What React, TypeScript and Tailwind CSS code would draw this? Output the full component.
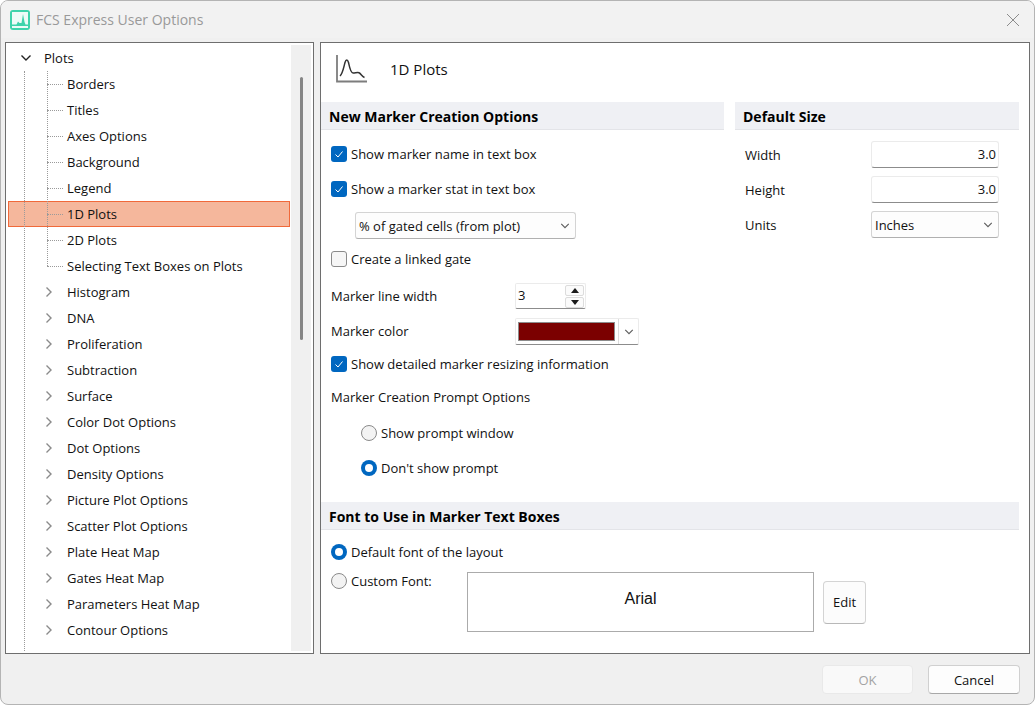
const treeItems = [
  { label: "Borders", leaf: true },
  { label: "Titles", leaf: true },
  { label: "Axes Options", leaf: true },
  { label: "Background", leaf: true },
  { label: "Legend", leaf: true },
  { label: "1D Plots", leaf: true, selected: true },
  { label: "2D Plots", leaf: true },
  { label: "Selecting Text Boxes on Plots", leaf: true },
  { label: "Histogram" },
  { label: "DNA" },
  { label: "Proliferation" },
  { label: "Subtraction" },
  { label: "Surface" },
  { label: "Color Dot Options" },
  { label: "Dot Options" },
  { label: "Density Options" },
  { label: "Picture Plot Options" },
  { label: "Scatter Plot Options" },
  { label: "Plate Heat Map" },
  { label: "Gates Heat Map" },
  { label: "Parameters Heat Map" },
  { label: "Contour Options" },
];

const Chevron = ({ dir, className }: { dir: "down" | "right"; className: string }) => (
  <svg viewBox="0 0 12 12" className={className} fill="none" stroke="currentColor" strokeWidth="1.4">
    {dir === "down" ? <path d="M1.500 3.500 6 8l4.500-4.500" /> : <path d="M3.500 1.500 8 6l-4.500 4.500" />}
  </svg>
);

const Check = ({ label, checked }: { label: string; checked?: boolean }) => (
  <div className="flex items-center gap-[4px]">
    <div
      className={`w-4 h-4 rounded-[3px] flex items-center justify-center ${
        checked ? "bg-[#0067c0]" : "bg-[#f6f6f6] border border-[#8a8a8a]"
      }`}
    >
      {checked && (
        <svg viewBox="0 0 16 16" className="w-4 h-4" fill="none" stroke="white" strokeWidth="1">
          <path d="M4.500 8.500 7 11l4.500-5.500" />
        </svg>
      )}
    </div>
    <span className="pt-[2px]">{label}</span>
  </div>
);

const Radio = ({ label, checked }: { label: string; checked?: boolean }) => (
  <div className="flex items-center gap-[4px]">
    {checked ? (
      <div className="w-4 h-4 rounded-full bg-[#0067c0] flex items-center justify-center">
        <div className="w-2 h-2 rounded-full bg-white" />
      </div>
    ) : (
      <div className="w-4 h-4 rounded-full bg-[#f3f3f3] border border-[#8a8a8a]" />
    )}
    <span className="pt-[2px]">{label}</span>
  </div>
);

const SectionHead = ({ title, className }: { title: string; className?: string }) => (
  <div
    className={`h-[28px] pt-[2px] bg-[#eff0f4] border-b border-[#e3e4e8] flex items-center font-bold text-[14px] text-black ${className ?? ""}`}
  >
    {title}
  </div>
);

const Select = ({ value, className }: { value: string; className: string }) => (
  <div
    className={`h-[27px] bg-[#fdfdfd] border border-[#d4d4d4] border-b-[#b0b0b0] rounded-[3px] flex items-center justify-between pl-[3px] pr-[5px] ${className}`}
  >
    <span className="pt-[2px]">{value}</span>
    <Chevron dir="down" className="w-[10px] h-[10px] text-[#5f5f5f]" />
  </div>
);

const NumberBox = ({ value }: { value: string }) => (
  <div className="w-[128px] h-[27px] bg-white border border-[#ebebeb] border-b-[#8c8c8c] rounded-[3px] flex items-center justify-end pr-[2px]">
    {value}
  </div>
);

const TinyArrow = ({ up }: { up?: boolean }) => (
  <div className="w-[19px] h-[11px] bg-[#fbfbfb] border border-[#dcdcdc] rounded-[2px] flex items-center justify-center">
    <svg viewBox="0 0 8 5" className="w-2 h-[5px]" fill="#1a1a1a">
      <path d={up ? "M4 0 8 5H0z" : "M0 0h8L4 5z"} />
    </svg>
  </div>
);

export default function App() {
  return (
    <div
      className="w-[1035px] h-[705px] bg-[#f0f0f0] flex flex-col overflow-hidden rounded-[8px] border border-[#b4b4b4] text-[13px] text-[#111111]"
      style={{ fontFamily: '"Open Sans", "Noto Sans", sans-serif' }}
    >
      {/* title bar */}
      <div className="h-[37px] bg-[#f2f2f2] flex items-center pl-[9px] pr-[14px] shrink-0">
        <svg viewBox="0 0 20 20" className="w-5 h-5 mr-[6px]">
          <rect width="20" height="20" rx="3" fill="#3fd3ab" />
          <rect x="2" y="2" width="16" height="16" fill="#eefbf7" />
          <path d="M2 14.500h4.500l1.500-3 1.500 1.500h2L13 4l1.500 8 1 2.500H18V16H2z" fill="#3fd3ab" />
        </svg>
        <span className="text-[14px] text-[#999999]">FCS Express User Options</span>
        <svg viewBox="0 0 14 14" className="w-[14px] h-[14px] ml-auto" fill="none" stroke="#8c8c8c" strokeWidth="1">
          <path d="M1 1l12 12M13 1 1 13" />
        </svg>
      </div>

      {/* body */}
      <div className="flex h-[612px] gap-[6px] pl-[4px] pr-[4px] mt-[4px] shrink-0">
        {/* tree */}
        <div className="w-[309px] bg-white border border-[#6e6e6e] flex p-[2px] relative overflow-hidden">
          <div className="flex-1 relative">
            <div className="absolute left-[16px] top-[26px] bottom-0 border-l border-dotted border-[#9a9a9a]" />
            <div className="absolute left-[39px] top-[26px] h-[195px] border-l border-dotted border-[#9a9a9a]" />
            <div className="h-[26px] flex items-center pl-[12px]">
              <Chevron dir="down" className="w-3 h-3 text-[#222222]" />
              <span className="ml-[12px] pt-[2px]">Plots</span>
            </div>
            {treeItems.map((item) =>
              item.leaf ? (
                <div
                  key={item.label}
                  className={`h-[26px] flex items-center pl-[39px] ${
                    item.selected ? "mr-[1px] bg-[#f5b79c] outline outline-1 -outline-offset-1 outline-[#f0693a]" : ""
                  }`}
                >
                  <div className="w-[16px] border-t border-dotted border-[#9a9a9a]" />
                  <span className="ml-[4px] pt-[2px] relative">{item.label}</span>
                </div>
              ) : (
                <div key={item.label} className="h-[26px] flex items-center pl-[35px]">
                  <Chevron dir="right" className="w-3 h-3 text-[#8a8a8a]" />
                  <span className="ml-[12px] pt-[2px]">{item.label}</span>
                </div>
              ),
            )}
          </div>
          <div className="w-[20px] bg-[#f0f0f0] shrink-0 flex justify-center pt-[32px] pb-0">
            <div className="w-[3px] h-[263px] rounded-full bg-[#858585]" />
          </div>
        </div>

        {/* options */}
        <div className="flex-1 bg-white border border-[#6e6e6e] flex flex-col overflow-hidden">
          <div className="h-[59px] flex items-center pl-[14px] pb-[4px] shrink-0">
            <svg viewBox="0 0 32 30" className="w-[32px] h-[30px] mb-[4px]" fill="none">
              <path d="M2 1v26.500H32" stroke="#7d7d7d" strokeWidth="1.800" />
              <path d="M5 22c2.500-2 3.500-8 5-13.500 1-3.500 2.500-3.500 3.500 0 1 4.500 2 10.500 4.500 10.500 2.500 0 4.500-.8 6-.2 2 .8 3 3.700 5.500 4.700" stroke="#333333" strokeWidth="1.500" />
            </svg>
            <span className="ml-[23px] mb-[2px] text-[15px]">1D Plots</span>
          </div>

          <div className="flex h-[400px] shrink-0">
            <div className="w-[403px] shrink-0">
              <SectionHead title="New Marker Creation Options" className="pl-[8px]" />
              <div className="pl-[10px]">
                <div className="h-[26px] mt-[11px] flex items-center">
                  <Check label="Show marker name in text box" checked />
                </div>
                <div className="h-[26px] mt-[9px] flex items-center">
                  <Check label="Show a marker stat in text box" checked />
                </div>
                <Select value="% of gated cells (from plot)" className="w-[221px] ml-[24px] mt-[10px]" />
                <div className="h-[26px] mt-[7px] flex items-center">
                  <Check label="Create a linked gate" />
                </div>
                <div className="h-[26px] mt-[11px] flex items-center">
                  <span className="w-[184px] pt-[2px]">Marker line width</span>
                  <div className="w-[71px] h-[26px] bg-white border-b border-[#8c8c8c] border-x border-t border-x-[#ebebeb] border-t-[#ebebeb] rounded-[2px] flex items-center justify-between pl-[2px] pr-[1px]">
                    <span>3</span>
                    <div className="flex flex-col gap-[1px]">
                      <TinyArrow up />
                      <TinyArrow />
                    </div>
                  </div>
                </div>
                <div className="h-[27px] mt-[9px] flex items-center">
                  <span className="w-[184px]">Marker color</span>
                  <div className="w-[124px] h-[27px] flex border border-[#ebebeb] border-b-[#8c8c8c] rounded-[2px] bg-white">
                    <div className="w-[102px] flex items-center pl-[2px]">
                      <div className="w-[97px] h-[19px] bg-[#7b0000] border border-[#8c8c8c]" />
                    </div>
                    <div className="flex-1 border-l border-[#dcdcdc] flex items-center justify-center">
                      <Chevron dir="down" className="w-[10px] h-[10px] text-[#5f5f5f]" />
                    </div>
                  </div>
                </div>
                <div className="h-[26px] mt-[6px] flex items-center">
                  <Check label="Show detailed marker resizing information" checked />
                </div>
                <div className="h-[26px] mt-[7px] pt-[2px] flex items-center">Marker Creation Prompt Options</div>
                <div className="h-[26px] mt-[10px] ml-[30px] flex items-center">
                  <Radio label="Show prompt window" />
                </div>
                <div className="h-[26px] mt-[9px] ml-[30px] flex items-center">
                  <Radio label="Don't show prompt" checked />
                </div>
              </div>
            </div>
            <div className="w-[284px] ml-[11px] shrink-0">
              <SectionHead title="Default Size" className="pl-[8px]" />
              <div className="pl-[10px]">
                <div className="flex items-center mt-[11px]">
                  <span className="w-[126px] pt-[2px]">Width</span>
                  <NumberBox value="3.0" />
                </div>
                <div className="flex items-center mt-[8px]">
                  <span className="w-[126px] pt-[2px]">Height</span>
                  <NumberBox value="3.0" />
                </div>
                <div className="flex items-center mt-[8px]">
                  <span className="w-[126px] pt-[2px]">Units</span>
                  <Select value="Inches" className="w-[128px]" />
                </div>
              </div>
            </div>
          </div>

          <SectionHead title="Font to Use in Marker Text Boxes" className="pl-[8px] mr-[10px]" />
          <div className="pl-[10px] flex flex-col">
            <div className="h-[26px] mt-[9px] flex items-center">
              <Radio label="Default font of the layout" checked />
            </div>
            <div className="flex mt-[7px]">
              <div className="w-[136px] h-[18px] flex items-center">
                <Radio label="Custom Font:" />
              </div>
              <div
                className="w-[347px] h-[60px] border border-[#ababab] flex items-center justify-center pb-[7px] text-[16px] text-[#111111]"
                style={{ fontFamily: '"Liberation Sans", sans-serif' }}
              >
                Arial
              </div>
              <div className="w-[43px] h-[43px] ml-[9px] mt-[9px] bg-[#fcfcfc] border border-[#d4d4d4] border-b-[#b8b8b8] rounded-[4px] flex items-center justify-center">
                Edit
              </div>
            </div>
          </div>
        </div>
      </div>

      {/* footer */}
      <div className="flex-1 flex items-center justify-end gap-[15px] pr-[14px]">
        <div className="w-[91px] h-[29px] pt-[3px] bg-[#f9f9f9] border border-[#e9e9e9] rounded-[4px] flex items-center justify-center text-[#a3a3a3]">
          OK
        </div>
        <div className="w-[92px] h-[29px] pt-[3px] bg-[#fdfdfd] border border-[#d0d0d0] border-b-[#a8a8a8] rounded-[4px] flex items-center justify-center">
          Cancel
        </div>
      </div>
    </div>
  );
}
